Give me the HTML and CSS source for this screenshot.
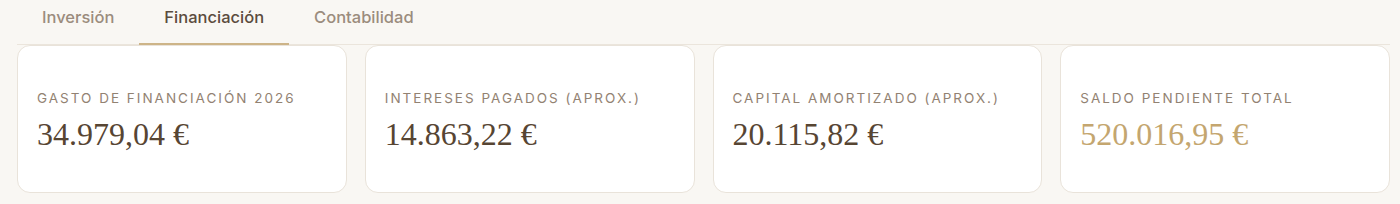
FILE: index.html
```html
<!DOCTYPE html>
<html lang="es">
<head>
<meta charset="utf-8">
<link rel="stylesheet" href="styles.css">
</head>
<body>
<div class="page">
  <nav class="tabs">
    <div class="tab">Inversión</div>
    <div class="tab active">Financiación</div>
    <div class="tab">Contabilidad</div>
  </nav>
  <div class="cards">
    <div class="card">
      <div class="label">Gasto de financiación 2026</div>
      <div class="value">34.979,04 €</div>
    </div>
    <div class="card">
      <div class="label">Intereses pagados (aprox.)</div>
      <div class="value">14.863,22 €</div>
    </div>
    <div class="card">
      <div class="label">Capital amortizado (aprox.)</div>
      <div class="value">20.115,82 €</div>
    </div>
    <div class="card">
      <div class="label">Saldo pendiente total</div>
      <div class="value gold">520.016,95 €</div>
    </div>
  </div>
</div>
</body>
</html>
```

FILE: styles.css
```css
html, body {
  margin: 0;
  padding: 0;
  background: #f9f7f3;
}
body {
  font-family: Inter, "Noto Sans", sans-serif;
}
.page {
  padding: 0 10px 0 17px;
}
.tabs {
  display: flex;
  border-bottom: 1px solid #ebe5dc;
}
.tab {
  padding: 6px 25px 15px;
  line-height: 22px;
  font-size: 16.5px;
  font-weight: 500;
  color: #9b8c7d;
  border-bottom: 2px solid transparent;
  margin-bottom: -1px;
}
.tab.active {
  color: #5b4b3d;
  border-bottom-color: #cdb488;
}
.cards {
  display: grid;
  grid-template-columns: repeat(4, 1fr);
  gap: 18px;
}
.card {
  background: #ffffff;
  border: 1px solid #e9e3da;
  border-radius: 13px;
  padding: 43px 19px 38px;
  display: flex;
  flex-direction: column;
  gap: 7px;
}
.label {
  font-size: 13.5px;
  line-height: 18px;
  font-weight: 400;
  letter-spacing: 2px;
  text-transform: uppercase;
  color: #928272;
}
.value {
  font-family: "Liberation Serif", serif;
  font-size: 32px;
  line-height: 40px;
  color: #574533;
  font-variant-numeric: oldstyle-nums;
}
.value.gold {
  color: #c4a66f;
}
```
